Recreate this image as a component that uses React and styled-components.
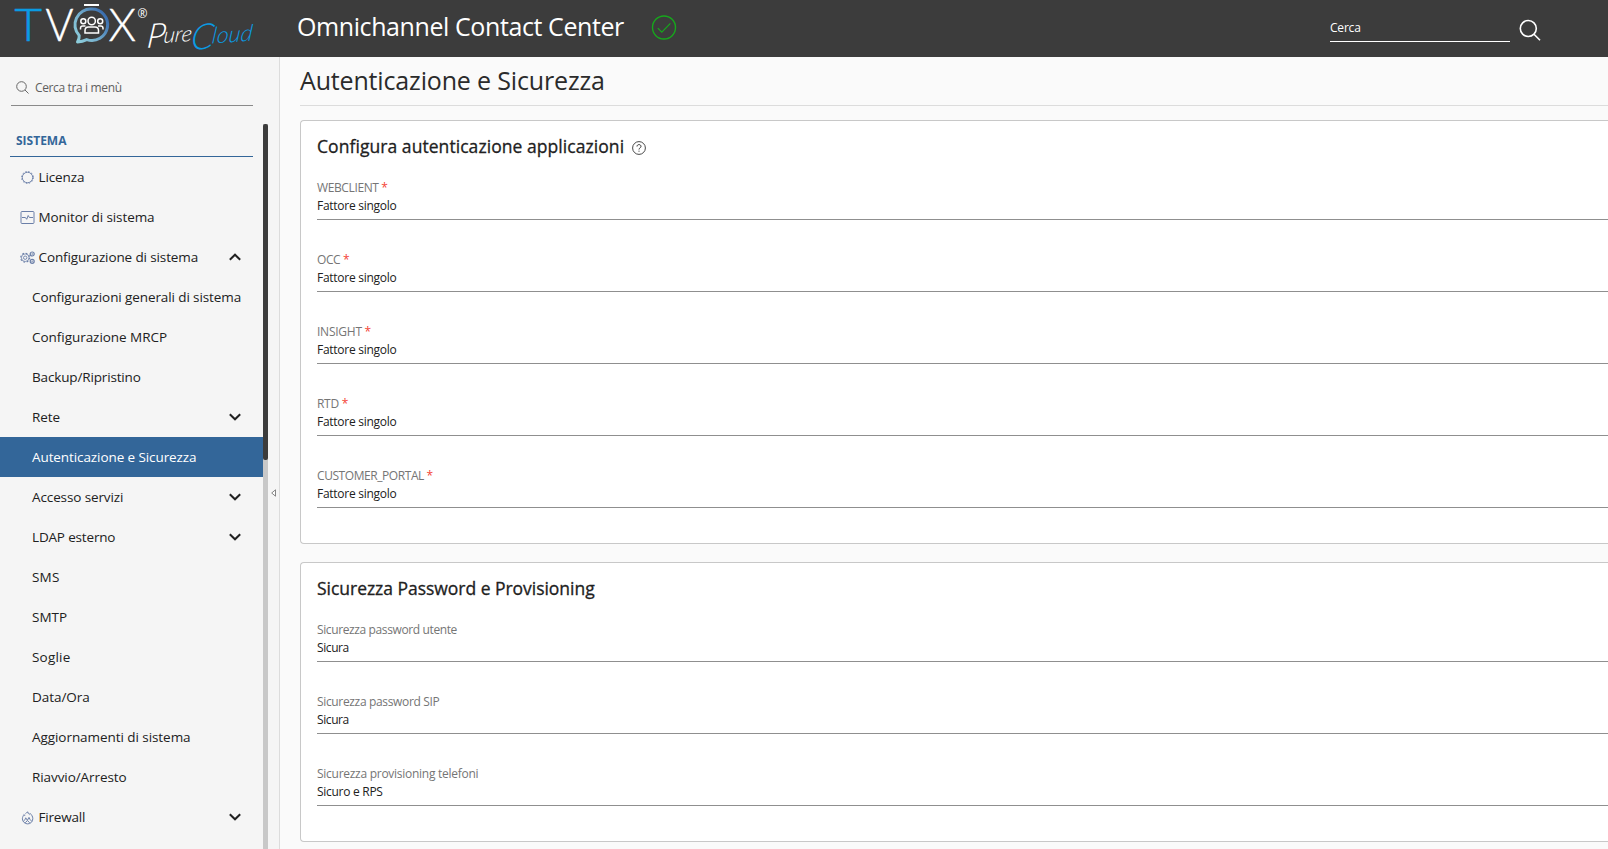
import React from 'react';
import styled, { createGlobalStyle, css } from 'styled-components';

const GlobalStyle = createGlobalStyle`
  *, *::before, *::after { box-sizing: border-box; }
  html, body { margin: 0; height: 100%; overflow: hidden; }
  body {
    font-family: 'Open Sans', 'Noto Sans', sans-serif;
    color: #212121;
    background: #fafafa;
  }
`;

const tracking = css`
  letter-spacing: ${(p) => p.$ls || 0}px;
  white-space: nowrap;
`;

const Page = styled.div`
  display: flex;
  flex-direction: column;
  height: 849px;
  overflow: hidden;
`;

const TopBar = styled.header`
  flex: 0 0 57px;
  display: flex;
  align-items: flex-start;
  background: #3c3c3c;
  color: #fff;
`;

const Logo = styled.svg`
  display: block;
  flex: 0 0 297px;
  width: 297px;
  height: 57px;
`;

const AppTitle = styled.h1`
  margin: 0;
  padding-top: 9px;
  font-size: 25px;
  line-height: 34px;
  font-weight: 400;
  ${tracking}
`;

const StatusIcon = styled.svg`
  display: block;
  width: 26px;
  height: 26px;
  margin: 14px 0 0 27px;
`;

const GlobalSearch = styled.div`
  width: 180px;
  height: 24px;
  margin: 18px 0 0 auto;
  border-bottom: 1px solid #fff;
  font-size: 12px;
  line-height: 20px;
  ${tracking}
`;

const GlobalSearchIcon = styled.svg`
  display: block;
  width: 22px;
  height: 22px;
  margin: 19px 67px 0 9px;
`;

const Body = styled.div`
  flex: 1;
  min-height: 0;
  display: flex;
`;

const Sidebar = styled.aside`
  flex: 0 0 280px;
  display: flex;
  flex-direction: column;
  background: #f5f5f5;
  border-right: 1px solid #dcdcdc;
`;

const MenuSearch = styled.div`
  flex: 0 0 49px;
  display: flex;
  align-items: flex-end;
  width: 242px;
  margin: 0 0 18px 11px;
  padding: 0 0 8px 5px;
  gap: 6px;
  border-bottom: 1px solid #8a8a8a;
  color: #5f5f5f;
  font-size: 12px;
  line-height: 18px;
  ${tracking}
`;

const MenuSearchIcon = styled.svg`
  display: block;
  width: 13px;
  height: 13px;
  margin-bottom: 3px;
`;

const MenuArea = styled.div`
  flex: 1;
  min-height: 0;
  display: flex;
`;

const Menu = styled.nav`
  flex: 0 0 263px;
  overflow: hidden;
`;

const SectionTitle = styled.div`
  width: 243px;
  height: 33px;
  margin-left: 10px;
  padding: 7px 0 0 6px;
  border-bottom: 1px solid #336699;
  color: #336699;
  font-size: 12px;
  line-height: 20px;
  font-weight: 700;
  ${tracking}
`;

const MenuRow = styled.div`
  display: flex;
  align-items: center;
  height: 40px;
  padding: 0 22px 0 ${(p) => (p.$child ? 32 : 20)}px;
  background: ${(p) => (p.$active ? '#336699' : 'transparent')};
  color: ${(p) => (p.$active ? '#fff' : '#212121')};
`;

const MenuIcon = styled.svg`
  display: block;
  flex: 0 0 15px;
  width: 15px;
  height: 15px;
  margin-right: 3.5px;
  fill: none;
  stroke: #6b7fa8;
`;

const MenuLabel = styled.span`
  flex: 1;
  font-size: 13.5px;
  line-height: 20px;
  ${tracking}
`;

const Chevron = styled.svg`
  display: block;
  width: 12px;
  height: 8px;
  fill: none;
  stroke: #212121;
  stroke-width: 2;
  transform: ${(p) => (p.$up ? 'rotate(180deg)' : 'none')};
`;

const ScrollTrack = styled.div`
  flex: 0 0 5px;
  background: #c8c8c8;
`;

const ScrollThumb = styled.div`
  height: 336px;
  border-radius: 2px;
  background: #3c3c3c;
`;

const Collapse = styled.div`
  flex: 1;
  display: flex;
  justify-content: flex-start;
  padding: 365px 0 0 3px;
`;

const CollapseIcon = styled.svg`
  display: block;
  width: 5px;
  height: 8px;
  fill: #fff;
  stroke: #777;
  stroke-width: 0.9;
`;

const Main = styled.main`
  flex: 1;
  min-width: 0;
  padding-left: 20px;
  overflow: hidden;
`;

const PageTitle = styled.h2`
  height: 49px;
  margin: 0 0 14px;
  padding: 6px 0 0;
  border-bottom: 1px solid #dcdcdc;
  color: #2b2b2b;
  font-size: 25px;
  line-height: 34px;
  font-weight: 400;
  ${tracking}
`;

const Card = styled.section`
  height: ${(p) => p.$h}px;
  margin-bottom: 18px;
  padding: 15px 0 0 16px;
  background: #fff;
  border: 1px solid #c8c8c8;
  border-right: 0;
  border-radius: 4px 0 0 4px;
`;

const CardHeader = styled.div`
  display: flex;
  align-items: center;
  height: 20px;
  margin-bottom: 19px;
  gap: 8px;
`;

const CardTitle = styled.h3`
  margin: 0;
  font-size: 17.5px;
  line-height: 20px;
  font-weight: 400;
  -webkit-text-stroke: 0.3px #212121;
  ${tracking}
`;

const HelpIcon = styled.svg`
  display: block;
  width: 14px;
  height: 14px;
  margin-top: 4px;
`;

const Field = styled.div`
  height: 45px;
  margin-bottom: 27px;
  padding-top: 4px;
  border-bottom: 1px solid #8f8f8f;
`;

const FieldLabel = styled.div`
  color: #757575;
  font-size: 12px;
  line-height: 18px;
  ${tracking}
`;

const Required = styled.span`
  color: #f44336;
`;

const FieldValue = styled.div`
  font-size: 12px;
  line-height: 18px;
  ${tracking}
`;

const LicenseGlyph = () => (
  <MenuIcon viewBox="0 0 15 15">
    <circle cx="7.5" cy="7.5" r="5.2" strokeWidth="0.9" />
    <circle cx="7.5" cy="7.5" r="5.9" strokeWidth="1" strokeDasharray="1.5 1.59" />
  </MenuIcon>
);

const MonitorGlyph = () => (
  <MenuIcon viewBox="0 0 15 15">
    <rect x="1" y="1.5" width="13" height="12" rx="1" />
    <path d="M2 7.5h3.4l1.3 1.8 1.5-3.8 1.2 2H13" strokeWidth="1" />
  </MenuIcon>
);

const GearsGlyph = () => (
  <MenuIcon viewBox="0 0 15 15">
    <circle cx="5.2" cy="7.7" r="1.7" strokeWidth="0.9" />
    <circle cx="5.2" cy="7.7" r="3.8" strokeWidth="0.8" />
    <circle cx="5.2" cy="7.7" r="4.5" strokeWidth="1.1" strokeDasharray="1.75 1.78" />
    <circle cx="12.2" cy="4" r="2" strokeWidth="1.2" />
    <circle cx="12.2" cy="4" r="0.5" strokeWidth="0.7" />
    <circle cx="12.2" cy="11.3" r="2" strokeWidth="1.2" />
    <circle cx="12.2" cy="11.3" r="0.5" strokeWidth="0.7" />
  </MenuIcon>
);

const FirewallGlyph = () => (
  <MenuIcon viewBox="0 0 15 15">
    <path
      d="M5.400 3.800C6 2.800 7.100 2.300 8 1.900c-.1 1.300.6 2 1.300 2.600.4-.2.6-.6.8-1.100 1.600 1.500 2.700 3.100 2.700 5.300 0 3-2.300 5.200-5.100 5.200S2.400 11.700 2.400 8.800c0-1.700.9-3 1.500-4.300.6.300.8.800 1 1.400"
      strokeWidth="1"
    />
    <path d="M3.5 11.2c1-.6 1.700-1.900 2.200-3.400l1.700 2.500L9 7.400c.6 1.700 1.500 3 2.700 3.800M5.200 12.800l2.200-2.300 2.300 2.300" strokeWidth="1" />
  </MenuIcon>
);

const glyphs = {
  license: LicenseGlyph,
  monitor: MonitorGlyph,
  gears: GearsGlyph,
  firewall: FirewallGlyph,
};

const menuItems = [
  { label: 'Licenza', icon: 'license', ls: -0.1 },
  { label: 'Monitor di sistema', icon: 'monitor', ls: -0.1 },
  { label: 'Configurazione di sistema', icon: 'gears', chevron: 'up', ls: -0.12 },
  { label: 'Configurazioni generali di sistema', ls: -0.1 },
  { label: 'Configurazione MRCP', ls: -0.04 },
  { label: 'Backup/Ripristino', ls: -0.15 },
  { label: 'Rete', chevron: 'down', ls: -0.05 },
  { label: 'Autenticazione e Sicurezza', active: true, ls: -0.09 },
  { label: 'Accesso servizi', chevron: 'down', ls: -0.11 },
  { label: 'LDAP esterno', chevron: 'down', ls: -0.17 },
  { label: 'SMS', ls: 0.2 },
  { label: 'SMTP', ls: 0 },
  { label: 'Soglie', ls: 0.2 },
  { label: 'Data/Ora', ls: -0.04 },
  { label: 'Aggiornamenti di sistema', ls: -0.06 },
  { label: 'Riavvio/Arresto', ls: -0.08 },
  { label: 'Firewall', icon: 'firewall', chevron: 'down', ls: -0.18 },
];

const authFields = [
  { label: 'WEBCLIENT', ls: -0.38 },
  { label: 'OCC', ls: -0.4 },
  { label: 'INSIGHT', ls: -0.25 },
  { label: 'RTD', ls: -0.3 },
  { label: 'CUSTOMER_PORTAL', ls: -0.43 },
];

const securityFields = [
  { label: 'Sicurezza password utente', value: 'Sicura', ls: -0.38, vls: -0.4 },
  { label: 'Sicurezza password SIP', value: 'Sicura', ls: -0.34, vls: -0.4 },
  { label: 'Sicurezza provisioning telefoni', value: 'Sicuro e RPS', ls: -0.27, vls: -0.28 },
];

const BrandLogo = () => (
  <Logo viewBox="0 0 297 57">
    <defs>
      <linearGradient id="bubble" x1="0" y1="1" x2="1" y2="0.3">
        <stop offset="0" stopColor="#8fd0dc" />
        <stop offset="0.45" stopColor="#79b3cf" />
        <stop offset="1" stopColor="#3b6fb0" />
      </linearGradient>
    </defs>
    <g fontFamily="Lato, sans-serif" fontWeight="300" fontSize="45">
      <text x="14.5" y="41" fill="#0a9be3" textLength="27.5" lengthAdjust="spacingAndGlyphs" stroke="#0a9be3" strokeWidth="0.6">T</text>
      <text x="45.5" y="41" fill="#fff" textLength="28" lengthAdjust="spacingAndGlyphs" stroke="#fff" strokeWidth="0.4">V</text>
      <text x="108.5" y="41" fill="#fff" textLength="27.5" lengthAdjust="spacingAndGlyphs" stroke="#fff" strokeWidth="0.4">X</text>
    </g>
    <rect x="84" y="4" width="15" height="2" fill="#fff" />
    <path
      d="M91.7 9.1a15.700 15.700 0 1 1-5 30.500c-2.800 1.500-6 2.300-9.200 2.400 1.300-2 1.900-4 1.700-6.500A15.700 15.700 0 0 1 91.700 9.100z"
      fill="none"
      stroke="url(#bubble)"
      strokeWidth="3"
      strokeLinejoin="round"
    />
    <g fill="none" stroke="#fff" strokeWidth="1.5">
      <circle cx="91.7" cy="21" r="3.7" />
      <circle cx="83.3" cy="21.2" r="2.5" />
      <circle cx="100.2" cy="21.2" r="2.5" />
      <path d="M85 33v-2.5c0-2.200 1.500-3.500 3.500-3.500h6.500c2 0 3.500 1.300 3.500 3.500V33z" />
      <path d="M80.5 29.5v-1.300c0-1.500 1-2.200 2.300-2.200h2.700M103 29.500v-1.300c0-1.500-1-2.200-2.300-2.200H98" />
    </g>
    <text x="137.5" y="17.5" fill="#fff" fontFamily="Open Sans, sans-serif" fontSize="12">®</text>
    <g fontFamily="Lato, sans-serif" fontWeight="300" fontStyle="italic">
      <text fill="#fff" transform="translate(146 48) skewX(-10) rotate(-4)">
        <tspan x="0" y="0" fontSize="34">P</tspan>
        <tspan dx="-2" dy="-4" fontSize="22">ure</tspan>
      </text>
      <text fill="#0a9be3" transform="translate(190 50) skewX(-10) rotate(-4)">
        <tspan x="0" y="0" fontSize="36">C</tspan>
        <tspan dx="-2" dy="-5" fontSize="23">loud</tspan>
      </text>
    </g>
  </Logo>
);

const MenuItem = ({ label, icon, chevron, active, ls }) => {
  const Glyph = icon && glyphs[icon];
  return (
    <MenuRow $child={!icon} $active={active}>
      {Glyph && <Glyph />}
      <MenuLabel $ls={ls}>{label}</MenuLabel>
      {chevron && (
        <Chevron $up={chevron === 'up'} viewBox="0 0 12 8">
          <path d="M0.8 1.3l5.2 5 5.2-5" />
        </Chevron>
      )}
    </MenuRow>
  );
};

const FormField = ({ label, value, required, ls, vls }) => (
  <Field>
    <FieldLabel $ls={ls}>
      {label}
      {required && <Required> *</Required>}
    </FieldLabel>
    <FieldValue $ls={vls}>{value}</FieldValue>
  </Field>
);

export default function App() {
  return (
    <Page>
      <GlobalStyle />
      <TopBar>
        <BrandLogo />
        <AppTitle $ls={-0.41}>Omnichannel Contact Center</AppTitle>
        <StatusIcon viewBox="0 0 26 26" fill="none" stroke="#16a81c">
          <circle cx="13" cy="13.5" r="11.5" strokeWidth="1.4" />
          <path d="M6.8 14.2l4 4 8.6-8.8" strokeWidth="1.2" />
        </StatusIcon>
        <GlobalSearch $ls={-0.2}>Cerca</GlobalSearch>
        <GlobalSearchIcon viewBox="0 0 22 22" fill="none" stroke="#fff" strokeWidth="1.6">
          <circle cx="9.3" cy="9.5" r="8" />
          <path d="M15 15.3l6 6" />
        </GlobalSearchIcon>
      </TopBar>
      <Body>
        <Sidebar>
          <MenuSearch $ls={-0.36}>
            <MenuSearchIcon viewBox="0 0 13 13" fill="none" stroke="#666" strokeWidth="1">
              <circle cx="5.5" cy="5.5" r="4.8" />
              <path d="M9 9l3.5 3.5" />
            </MenuSearchIcon>
            Cerca tra i menù
          </MenuSearch>
          <MenuArea>
            <Menu>
              <SectionTitle>SISTEMA</SectionTitle>
              {menuItems.map((item) => (
                <MenuItem key={item.label} {...item} />
              ))}
            </Menu>
            <ScrollTrack>
              <ScrollThumb />
            </ScrollTrack>
            <Collapse>
              <CollapseIcon viewBox="0 0 5 8">
                <path d="M4.5 0.8v6.4L0.7 4z" />
              </CollapseIcon>
            </Collapse>
          </MenuArea>
        </Sidebar>
        <Main>
          <PageTitle $ls={-0.16}>Autenticazione e Sicurezza</PageTitle>
          <Card $h={424}>
            <CardHeader>
              <CardTitle $ls={0.06}>Configura autenticazione applicazioni</CardTitle>
              <HelpIcon viewBox="0 0 14 14">
                <circle cx="7" cy="7" r="6.4" fill="none" stroke="#333" strokeWidth="0.9" />
                <path d="M5 5.5c0-1.200.9-1.900 2-1.900s2 .7 2 1.800c0 1.400-2 1.500-2 3.100M7 9.700v1" fill="none" stroke="#333" />
              </HelpIcon>
            </CardHeader>
            {authFields.map((f) => (
              <FormField key={f.label} {...f} value="Fattore singolo" vls={-0.27} required />
            ))}
          </Card>
          <Card $h={280}>
            <CardHeader>
              <CardTitle $ls={-0.03}>Sicurezza Password e Provisioning</CardTitle>
            </CardHeader>
            {securityFields.map((f) => (
              <FormField key={f.label} {...f} />
            ))}
          </Card>
        </Main>
      </Body>
    </Page>
  );
}
